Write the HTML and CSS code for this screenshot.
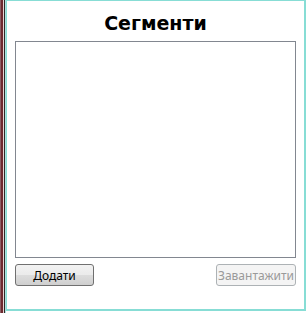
FILE: index.html
```html
<!DOCTYPE html>
<html>
<head>
<meta charset="utf-8">
<link rel="stylesheet" href="styles.css">
</head>
<body>
<div class="frame">
  <div class="edge"></div>
  <div class="panel">
    <h1 class="title">Сегменти</h1>
    <div class="listbox"></div>
    <div class="actions">
      <button class="btn">Додати</button>
      <button class="btn" disabled>Завантажити</button>
    </div>
  </div>
</div>
</body>
</html>
```

FILE: styles.css
```css
html, body {
  margin: 0;
  padding: 0;
  background: #ffffff;
}
.frame {
  display: flex;
  width: 307px;
  height: 313px;
}
.edge {
  width: 6px;
  height: 313px;
  background: linear-gradient(to right,
    #8c6066 0, #8c6066 1px,
    #6e2a30 1px, #6e2a30 3px,
    #e6d2d2 3px, #e6d2d2 4px,
    #302828 4px, #302828 5px,
    #a8e2de 5px, #a8e2de 6px);
}
.panel {
  box-sizing: border-box;
  width: 300px;
  height: 311px;
  border-top: 1px solid #87ddd5;
  border-left: 1px solid #87ddd5;
  border-right: 2px solid #87ddd5;
  border-bottom: 2px solid #87ddd5;
  padding: 0 8px;
  display: flex;
  flex-direction: column;
}
.title {
  margin: 0;
  height: 40px;
  box-sizing: border-box;
  padding-top: 9px;
  font-family: "DejaVu Sans", Verdana, sans-serif;
  font-weight: bold;
  font-size: 19px;
  line-height: 26px;
  text-align: center;
  color: #000;
}
.listbox {
  box-sizing: border-box;
  height: 217px;
  border: 1px solid #828790;
  background: #fff;
}
.actions {
  display: flex;
  justify-content: space-between;
  margin-top: 6px;
}
.btn {
  box-sizing: border-box;
  height: 22px;
  width: 79px;
  padding: 0;
  border: 1px solid #707070;
  border-radius: 3px;
  background: linear-gradient(to bottom, #f2f2f2 0, #ebebeb 50%, #dddddd 50%, #cfcfcf 100%);
  font-family: "Noto Sans", "Open Sans", sans-serif;
  font-size: 12px;
  color: #000;
}
.btn:disabled {
  width: 80px;
  border-color: #adb2b5;
  background: #f4f4f4;
  color: #9a9a9a;
}
```
